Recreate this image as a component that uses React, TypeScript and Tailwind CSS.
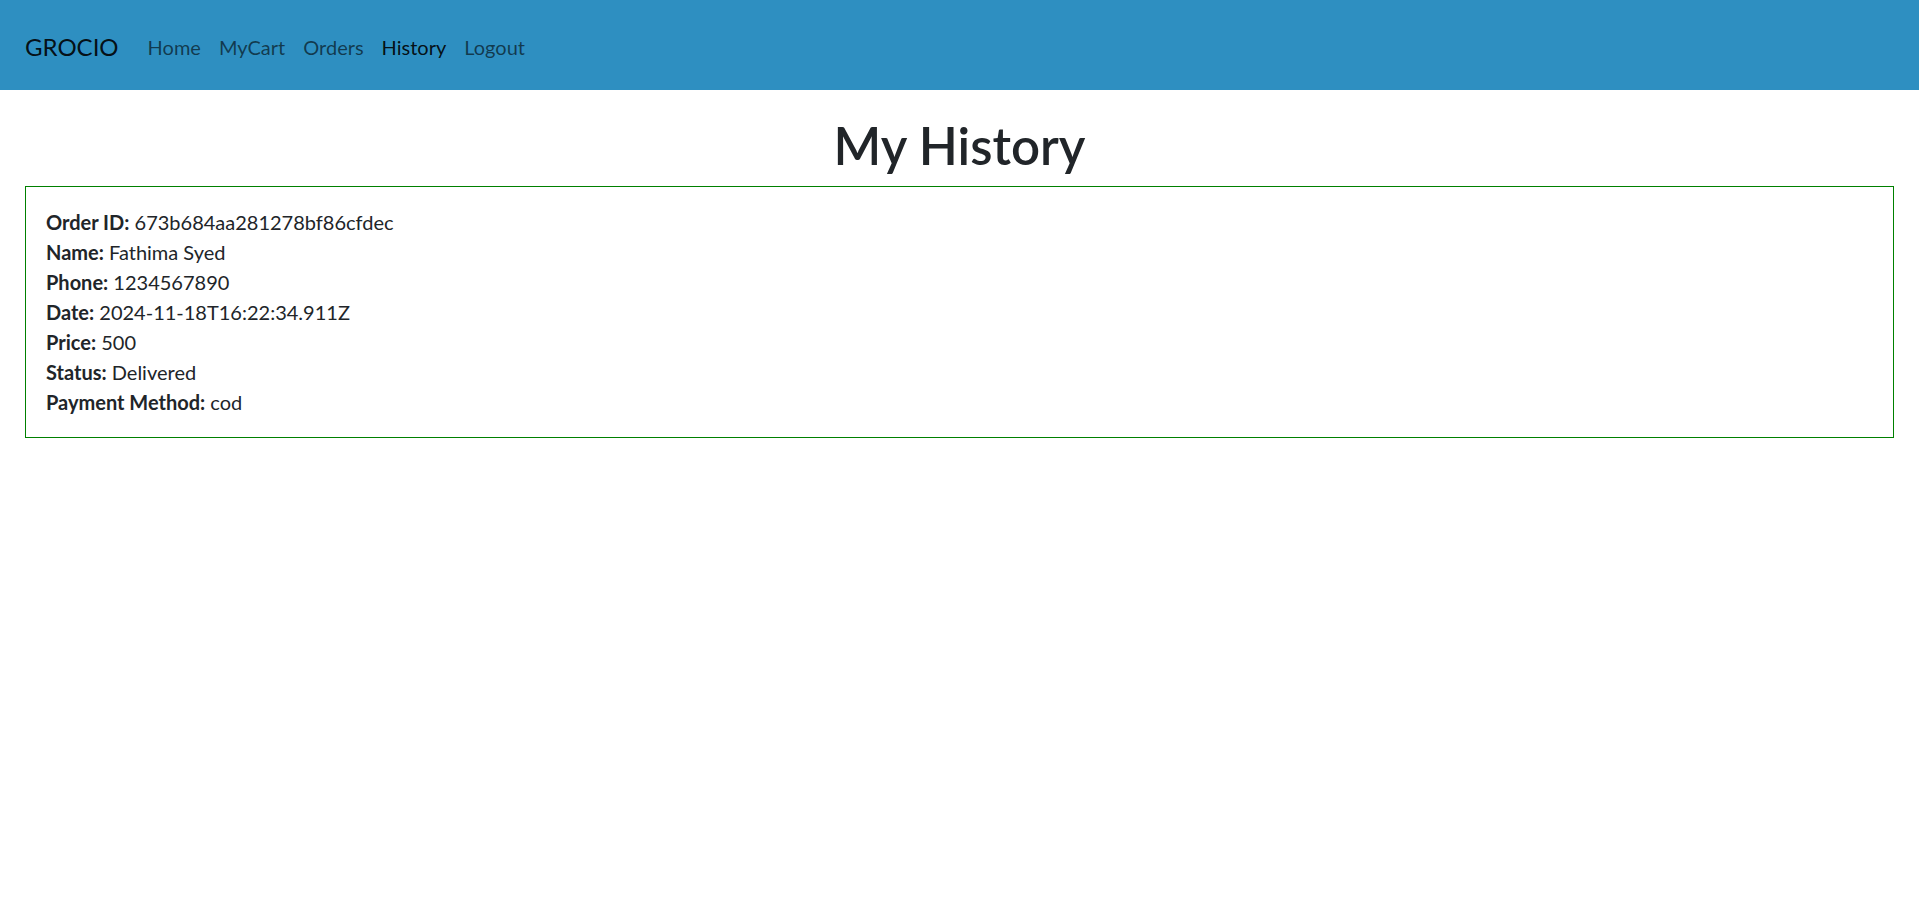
import React from "react";

const rows: [string, string][] = [
  ["Order ID:", "673b684aa281278bf86cfdec"],
  ["Name:", "Fathima Syed"],
  ["Phone:", "1234567890"],
  ["Date:", "2024-11-18T16:22:34.911Z"],
  ["Price:", "500"],
  ["Status:", "Delivered"],
  ["Payment Method:", "cod"],
];

export default function App() {
  return (
    <div className="min-h-[914px] bg-white text-[#212529] font-['Lato',_'Open_Sans',_sans-serif]">
      <nav className="h-[90px] bg-[#2e8fc1] flex items-center px-[25px] pt-[3px]">
        <span className="text-[24px] leading-[30px] text-black/90 mr-[20px]">GROCIO</span>
        <ul className="flex items-center text-[20px] leading-[30px]">
          {["Home", "MyCart", "Orders", "History", "Logout"].map((l) => (
            <li key={l} className={"px-[9px] " + (l === "History" ? "text-black/90" : "text-black/60")}>
              {l}
            </li>
          ))}
        </ul>
      </nav>
      <div className="px-[25px] pt-[26px]">
        <h1 className="text-center text-[51px] leading-[60px] font-semibold mb-[10px]">My History</h1>
        <div className="border border-[#008000] p-[20px]">
          {rows.map(([k, v]) => (
            <div key={k} className="text-[20px] leading-[30px]">
              <span className="font-bold">{k}</span> {v}
            </div>
          ))}
        </div>
      </div>
    </div>
  );
}
